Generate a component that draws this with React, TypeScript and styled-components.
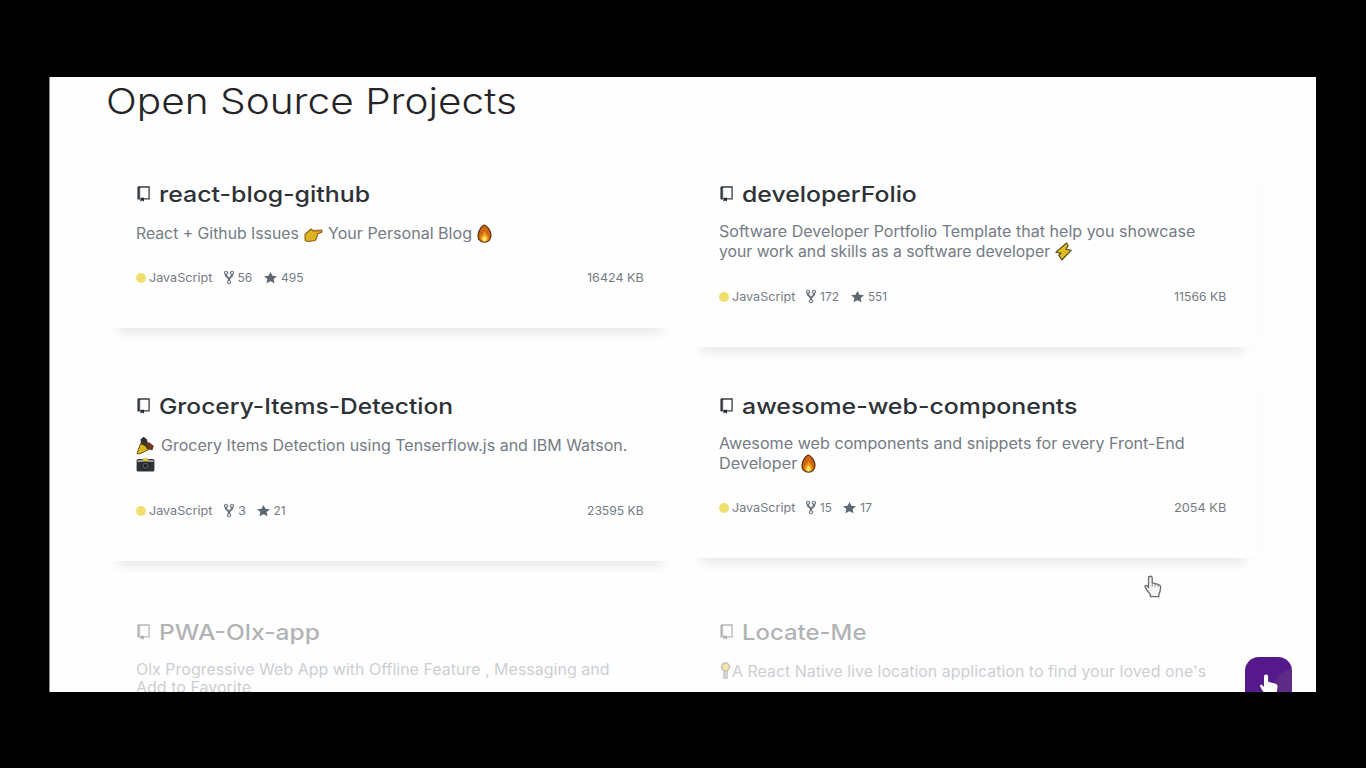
import React, { useLayoutEffect, useRef, useState } from "react";
import styled, { createGlobalStyle } from "styled-components";

const GlobalStyle = createGlobalStyle`
  body { margin: 0; background: #000; font-family: "Inter", "Liberation Sans", sans-serif; }
  *, *::before, *::after { box-sizing: border-box; }
  svg { display: block; flex: none; }
`;

const Screen = styled.div`
  width: 1366px;
  height: 768px;
  padding: 77px 50px 76px 49px;
  background: #000;
  overflow: hidden;
`;

const Stage = styled.main`
  position: relative;
  width: 1267px;
  height: 615px;
  padding: 0 57px 0 56px;
  border-left: 1px solid #8a8a8a;
  background: #fefefe;
  overflow: hidden;
`;

const Heading = styled.h1`
  display: flex;
  align-items: center;
  height: 48px;
  margin: 0 0 39px;
  font-size: 35.5px;
  font-weight: 350;
  color: #252527;
`;

const Columns = styled.div`
  display: flex;
  gap: 15.5px;
`;

const Column = styled.div`
  display: flex;
  flex-direction: column;
  flex: none;
  width: 567px;
`;

const Slot = styled.div<{ $height: number }>`
  height: ${(p) => p.$height}px;
`;

const CardBox = styled.article<{ $height: number; $faded?: boolean }>`
  display: flex;
  flex-direction: column;
  height: ${(p) => p.$height}px;
  padding: 14px 30px 0;
  border-radius: 6px;
  background: #fefefe;
  opacity: ${(p) => (p.$faded ? 0.36 : 1)};
  box-shadow: ${(p) =>
    p.$faded ? "none" : "0 18px 10px -12px rgba(0, 0, 0, 0.07), 3px 4px 14px rgba(0, 0, 0, 0.015)"};
`;

const CardTitle = styled.h2`
  display: flex;
  align-items: center;
  gap: 9px;
  height: 32px;
  margin: 0;
  padding-left: 1px;
  font-size: 22px;
  font-weight: 450;
  color: #2d3237;
`;

const Description = styled.div<{ $top: number; $pitch: number }>`
  display: flex;
  flex-direction: column;
  margin-top: ${(p) => p.$top - 0.6}px;
  font-size: 15.2px;
  color: #747b84;
  & > div { height: ${(p) => p.$pitch}px; }
`;

const Row = styled.div`
  display: flex;
  align-items: center;
`;

const Footer = styled.footer`
  display: flex;
  align-items: center;
  height: 20px;
  margin: auto 0 40.5px;
  font-size: 12px;
  color: #747b84;
`;

const Dot = styled.span`
  width: 10px;
  height: 10px;
  margin-right: 3px;
  border-radius: 50%;
  background: #efdf6c;
`;

const Gap = styled.span<{ $w: number }>`
  flex: none;
  width: ${(p) => p.$w}px;
`;

const Size = styled.span`
  margin-left: auto;
`;

const FitBox = styled.span<{ $width: number }>`
  display: block;
  flex: none;
  width: ${(p) => p.$width}px;
  white-space: nowrap;
`;

const FitInner = styled.span`
  display: inline-block;
  transform-origin: 0 50%;
`;

const TopButton = styled.button`
  position: absolute;
  left: 1195px;
  top: 580px;
  display: flex;
  justify-content: center;
  width: 47px;
  height: 52px;
  padding: 16px 0 0;
  border: 0;
  border-radius: 14px;
  background: radial-gradient(circle at 48px 32px, #5d2a85 0 19px, #55198b 20px);
`;

const Pointer = styled.div`
  position: absolute;
  left: 1094px;
  top: 498px;
`;

/* Stretches a run of text so that it fills a given measure. */
function Fit({ width, children }: { width: number; children: React.ReactNode }) {
  const ref = useRef<HTMLSpanElement>(null);
  const [scale, setScale] = useState(1);
  useLayoutEffect(() => {
    if (ref.current) setScale(width / ref.current.offsetWidth);
  }, [width]);
  return (
    <FitBox $width={width}>
      <FitInner ref={ref} style={{ transform: `scaleX(${scale})` }}>
        {children}
      </FitInner>
    </FitBox>
  );
}

const RepoIcon = () => (
  <svg width="13" height="16" viewBox="0 0 13 16">
    <path d="M1.2 1h10.9v11.8H7M3 12.8H1.2V1" fill="none" stroke="#3a3f44" strokeWidth="1.3" />
    <path d="M.7 .7h2.5v12.1H.7z" fill="#24292e" opacity=".75" />
    <path d="M3.4 11.8h3.6v3.6L5.2 14.4l-1.8 1z" fill="#24292e" />
  </svg>
);

const ForkIcon = () => (
  <svg width="10" height="15" viewBox="0 0 10 16" preserveAspectRatio="none">
    <path
      fill="#6a737d"
      stroke="#6a737d"
      strokeWidth=".3"
      d="M8 1a1.993 1.993 0 0 0-1 3.72V6L5 8 3 6V4.72A1.993 1.993 0 0 0 2 1a1.993 1.993 0 0 0-1 3.72V6.5l3 3v1.78A1.993 1.993 0 0 0 5 15a1.993 1.993 0 0 0 1-3.72V9.5l3-3V4.72A1.993 1.993 0 0 0 8 1zM2 4.2C1.34 4.2.8 3.65.8 3c0-.65.55-1.2 1.2-1.2.65 0 1.2.55 1.2 1.2 0 .65-.55 1.2-1.2 1.2zm3 10c-.66 0-1.2-.55-1.2-1.2 0-.65.55-1.2 1.2-1.2.65 0 1.2.55 1.2 1.2 0 .65-.55 1.2-1.2 1.2zm3-10c-.66 0-1.2-.55-1.2-1.2 0-.65.55-1.2 1.2-1.2.65 0 1.2.55 1.2 1.2 0 .65-.55 1.2-1.2 1.2z"
    />
  </svg>
);

const StarIcon = () => (
  <svg width="13" height="14" viewBox="0 0 14 16" preserveAspectRatio="none">
    <path fill="#5f6871" d="M14 6l-4.9-.64L7 1 4.9 5.36 0 6l3.6 3.26L2.67 14 7 11.67 11.33 14l-.93-4.74L14 6z" />
  </svg>
);

const PointEmoji = () => (
  <svg width="19" height="19" viewBox="0 0 19 19">
    <path
      d="M1 10.500 7 5 9 6.500 17.800 6 18 8 13.400 10 13 13 11.200 16.500 4.600 17.500 1.200 16.800z"
      fill="#dcb420"
      stroke="#8a5a14"
      strokeWidth="1.1"
      strokeLinejoin="round"
    />
    <path d="M8.6 7.200 17 6.800" stroke="#c47a22" strokeWidth="1.600" />
  </svg>
);

const FireEmoji = () => (
  <svg width="15" height="19" viewBox="0 0 15 19">
    <path
      d="M7.200 1C10 1.600 14 6.400 14 11.600c0 4-2.600 6.600-6.500 6.600S1 15.600 1 11.800C1 8 2.600 5.600 3.800 3.800 5 2.400 6 1.500 7.200 1z"
      fill="#d0650f"
      stroke="#5c3410"
      strokeWidth="1.2"
    />
    <path d="M7.600 7c.6 2 3.800 4.200 3.800 7 0 2.300-1.600 3.600-3.900 3.600s-4-1.400-4-3.500C3.500 11.400 6.800 10 7.600 7z" fill="#f09a1c" />
    <path d="M7.600 11.600c.5 1 2 1.600 2 3.300 0 1.500-.8 2.500-2.100 2.500s-2.200-.9-2.200-2.400c0-1.500 1.900-2.100 2.300-3.400z" fill="#fbe66a" />
  </svg>
);

const BoltEmoji = () => (
  <svg width="17" height="19" viewBox="0 0 17 19">
    <path
      d="M11.600 1 .9 10.200l5.200 1.200-2.500 2 .8.700L6.800 18l9.400-9.700-5.300-1.100 2.200-3.600z"
      fill="#dcbc1e"
      stroke="#54461c"
      strokeWidth="1.100"
      strokeLinejoin="round"
    />
  </svg>
);

const PartyEmoji = () => (
  <svg width="19" height="19" viewBox="0 0 19 19">
    <path d="M4.500 3.500 7.500.8l3.300 2.400 1 3.600 5.800 3-1.300 4.400-5.600-1.400L5 7.600z" fill="#33302f" />
    <path d="m10 8 3-2 4.500 4-1.300 4-4-1.200z" fill="#6b3a1c" />
    <path d="M4.600 7.400 1 17.600l2.600.4 9.200-4.600C12 10.400 7.800 7 4.600 7.400z" fill="#dcb71e" stroke="#5e4914" strokeWidth=".9" />
    <path d="M5 7.800c3 .4 6 2.800 7 5.400" stroke="#3e3014" strokeWidth="1.500" fill="none" />
  </svg>
);

const CameraEmoji = () => (
  <svg width="19" height="16" viewBox="0 0 19 16">
    <rect x=".6" y="2" width="17.800" height="12.400" rx="1.500" fill="#303336" />
    <path d="M1.500 3h4.500l1-1.400h5L13 3h4.500v2H1.500z" fill="#9b9c98" />
    <path d="m9.500 0 1 1.700 1.800.5-1.400 1.300.2 1.700-1.600-.8-1.600.8.2-1.700-1.400-1.300 1.800-.5z" fill="#e6c72c" />
    <circle cx="9.500" cy="8.800" r="4" fill="#4d5256" stroke="#171a1c" />
    <circle cx="9.500" cy="8.800" r="1.800" fill="#1d2022" />
  </svg>
);

const BulbEmoji = () => (
  <svg width="11" height="18" viewBox="0 0 11 18">
    <path d="M3.600 8h3.800v8.500H3.600z" fill="#888" stroke="#555" strokeWidth=".8" />
    <circle cx="5.500" cy="5" r="4" fill="#dfb800" stroke="#55503a" strokeWidth="1.300" />
  </svg>
);

const HAND =
  "M6.200 1.200c1.200 0 1.800.8 1.800 1.900v4.500l5.800 1.500c1.600.5 2.600 1.300 2.400 3l-.6 4.200-1.200 2.500v2.400H6.200v-2L3 15.200 1 11.600c-.4-1.200 1-1.900 1.900-1.100l1.500 1.700V3.100c0-1.100.6-1.900 1.800-1.900z";

type Repo = {
  name: string;
  nameWidth: number;
  height: number;
  slot: number;
  top: number;
  pitch: number;
  faded?: boolean;
  lines: React.ReactNode[];
  forks?: [string, number, number];
  stars?: [string, number];
  size?: [string, number];
};

const left: Repo[] = [
  {
    name: "react-blog-github",
    nameWidth: 211.5,
    height: 164,
    slot: 212,
    top: 14,
    pitch: 20,
    lines: [
      <>
        <Fit width={163}>React + Github Issues</Fit>
        <Gap $w={4.5} />
        <PointEmoji />
        <Gap $w={5} />
        <Fit width={144}>Your Personal Blog</Fit>
        <Gap $w={5} />
        <FireEmoji />
      </>,
    ],
    forks: ["56", 15, 11.5],
    stars: ["495", 23],
    size: ["16424 KB", 56.5],
  },
  {
    name: "Grocery-Items-Detection",
    nameWidth: 294.5,
    height: 185,
    slot: 226,
    top: 14,
    pitch: 20,
    lines: [
      <>
        <PartyEmoji />
        <Gap $w={5.5} />
        <Fit width={466}>Grocery Items Detection using Tenserflow.js and IBM Watson.</Fit>
      </>,
      <CameraEmoji />,
    ],
    forks: ["3", 7.5, 11.5],
    stars: ["21", 12],
    size: ["23595 KB", 56.5],
  },
  {
    name: "PWA-Olx-app",
    nameWidth: 161,
    height: 180,
    slot: 180,
    top: 13,
    pitch: 18,
    faded: true,
    lines: [
      <Fit width={473}>Olx Progressive Web App with Offline Feature , Messaging and</Fit>,
      <Fit width={115}>Add to Favorite</Fit>,
    ],
  },
];

const right: Repo[] = [
  {
    name: "developerFolio",
    nameWidth: 174.5,
    height: 183,
    slot: 212,
    top: 12,
    pitch: 20,
    lines: [
      <Fit width={476}>Software Developer Portfolio Template that help you showcase</Fit>,
      <>
        <Fit width={331}>your work and skills as a software developer</Fit>
        <Gap $w={5} />
        <BoltEmoji />
      </>,
    ],
    forks: ["172", 19, 11.5],
    stars: ["551", 18.5],
    size: ["11566 KB", 52],
  },
  {
    name: "awesome-web-components",
    nameWidth: 336,
    height: 182,
    slot: 226,
    top: 12,
    pitch: 20,
    lines: [
      <Fit width={465.5}>Awesome web components and snippets for every Front-End</Fit>,
      <>
        <Fit width={78}>Developer</Fit>
        <Gap $w={4.5} />
        <FireEmoji />
      </>,
    ],
    forks: ["15", 11.5, 11.5],
    stars: ["17", 12.5],
    size: ["2054 KB", 52],
  },
  {
    name: "Locate-Me",
    nameWidth: 125,
    height: 180,
    slot: 180,
    top: 14,
    pitch: 20,
    faded: true,
    lines: [
      <>
        <Gap $w={1} />
        <BulbEmoji />
        <Gap $w={1} />
        <Fit width={474}>A React Native live location application to find your loved one's</Fit>
      </>,
    ],
  },
];

function RepoCard({ repo }: { repo: Repo }) {
  return (
    <Slot $height={repo.slot}>
      <CardBox $height={repo.height} $faded={repo.faded}>
        <CardTitle>
          <RepoIcon />
          <Fit width={repo.nameWidth}>{repo.name}</Fit>
        </CardTitle>
        <Description $top={repo.top} $pitch={repo.pitch}>
          {repo.lines.map((line, i) => (
            <Row key={i}>{line}</Row>
          ))}
        </Description>
        {repo.forks && repo.stars && repo.size && (
          <Footer>
            <Dot />
            <Fit width={63}>JavaScript</Fit>
            <Gap $w={11.5} />
            <ForkIcon />
            <Gap $w={4} />
            <Fit width={repo.forks[1]}>{repo.forks[0]}</Fit>
            <Gap $w={repo.forks[2]} />
            <StarIcon />
            <Gap $w={4} />
            <Fit width={repo.stars[1]}>{repo.stars[0]}</Fit>
            <Size>
              <Fit width={repo.size[1]}>{repo.size[0]}</Fit>
            </Size>
          </Footer>
        )}
      </CardBox>
    </Slot>
  );
}

export default function App() {
  return (
    <>
      <GlobalStyle />
      <Screen>
        <Stage>
          <Heading>
            <Fit width={411.5}>Open Source Projects</Fit>
          </Heading>
          <Columns>
            {[left, right].map((repos, i) => (
              <Column key={i}>
                {repos.map((repo) => (
                  <RepoCard key={repo.name} repo={repo} />
                ))}
              </Column>
            ))}
          </Columns>
          <Pointer>
            <svg width="18" height="23" viewBox="0 0 17.500 22.500">
              <path d={HAND} fill="#f4f4f4" stroke="#6c6c6c" strokeWidth="1.300" strokeLinejoin="round" />
              <path d="M8 7.600v3.600M10.800 8.800v2.600M13.500 9.500v2.200" stroke="#8a8a8a" strokeWidth="1" />
            </svg>
          </Pointer>
          <TopButton aria-label="Back to top">
            <svg width="20" height="26" viewBox="0 0 17.500 22.500">
              <path d={HAND} fill="#fff" />
            </svg>
          </TopButton>
        </Stage>
      </Screen>
    </>
  );
}
